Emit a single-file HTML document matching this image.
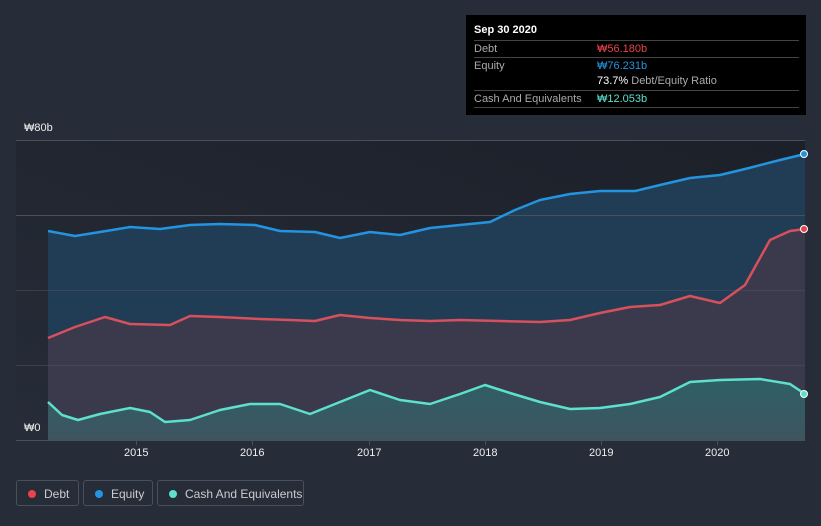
<!DOCTYPE html>
<html><head><meta charset="utf-8"><style>
body{margin:0;width:821px;height:526px;background:#262c38;font-family:"Liberation Sans","Noto Sans CJK KR",sans-serif;overflow:hidden;position:relative}
.tt{position:absolute;left:466px;top:15px;width:340px;height:100px;background:#000;color:#fff;font-size:11px}
.tt .r{position:absolute;left:8px;width:325px;border-top:1px solid #444;height:17px;line-height:17px;color:#aaa}
.tt .v{position:absolute;left:123px;top:0}
.lg{position:absolute;top:480px;height:26px;border:1px solid #4a505a;border-radius:3px;color:#ccc;font-size:12px;line-height:26px;box-sizing:border-box}
.lg i{position:absolute;left:11px;top:9px;width:8px;height:8px;border-radius:50%}
.lg span{position:absolute;left:27px}
.ax{position:absolute;color:#eee;font-size:11px}
</style></head><body>
<svg width="821" height="526" style="position:absolute;left:0;top:0">
<defs>
<linearGradient id="bg" x1="0" y1="1" x2="1" y2="0"><stop offset="0" stop-color="#262c38"/><stop offset="1" stop-color="#1c2029"/></linearGradient>
<linearGradient id="cf" x1="0" y1="0" x2="0" y2="1"><stop offset="0" stop-color="#2e5f66"/><stop offset="1" stop-color="#3e5560"/></linearGradient>
</defs>
<rect x="16" y="140" width="789" height="300" fill="url(#bg)"/>
<path d="M48,231 L75,236 L100,232 L130,227 L160,229 L190,225 L220,224 L255,225 L280,231 L315,232 L340,238 L370,232 L400,235 L430,228 L460,225 L490,222 L515,210 L540,200 L570,194 L600,191 L635,191 L660,185 L690,178 L720,175 L745,169 L780,160 L805,154 L805,440 L48,440Z" fill="#213d55"/>
<path d="M48,338 L75,327 L105,317 L130,324 L170,325 L190,316 L220,317 L260,319 L290,320 L315,321 L340,315 L370,318 L400,320 L430,321 L460,320 L500,321 L540,322 L570,320 L600,313 L630,307 L660,305 L690,296 L720,303 L745,285 L770,240 L790,231 L805,229 L805,440 L48,440Z" fill="#3a3a4c"/>
<path d="M48,402 L62,415 L78,420 L100,414 L130,408 L150,412 L165,422 L190,420 L220,410 L250,404 L280,404 L310,414 L340,402 L370,390 L400,400 L430,404 L460,394 L485,385 L510,393 L540,402 L570,409 L600,408 L630,404 L660,397 L690,382 L720,380 L760,379 L790,384 L805,394 L805,440 L48,440Z" fill="url(#cf)"/>
<g stroke="#4a505a" stroke-width="1"><line x1="16" y1="140.5" x2="805" y2="140.5"/><line x1="16" y1="215.5" x2="805" y2="215.5"/><line x1="16" y1="290.5" x2="805" y2="290.5" stroke-opacity=".6"/><line x1="16" y1="365.5" x2="805" y2="365.5" stroke-opacity=".6"/><line x1="16" y1="440.5" x2="805" y2="440.5"/></g>
<g fill="none" stroke-width="2.5" stroke-linejoin="round">
<polyline stroke="#2394df" points="48,231 75,236 100,232 130,227 160,229 190,225 220,224 255,225 280,231 315,232 340,238 370,232 400,235 430,228 460,225 490,222 515,210 540,200 570,194 600,191 635,191 660,185 690,178 720,175 745,169 780,160 805,154"/>
<polyline stroke="#d8505c" points="48,338 75,327 105,317 130,324 170,325 190,316 220,317 260,319 290,320 315,321 340,315 370,318 400,320 430,321 460,320 500,321 540,322 570,320 600,313 630,307 660,305 690,296 720,303 745,285 770,240 790,231 805,229"/>
<polyline stroke="#5de0cc" points="48,402 62,415 78,420 100,414 130,408 150,412 165,422 190,420 220,410 250,404 280,404 310,414 340,402 370,390 400,400 430,404 460,394 485,385 510,393 540,402 570,409 600,408 630,404 660,397 690,382 720,380 760,379 790,384 805,394"/>
</g>
<circle cx="804" cy="154" r="3.5" fill="#2394df" stroke="#fff" stroke-width="1"/>
<circle cx="804" cy="229" r="3.5" fill="#e8434e" stroke="#fff" stroke-width="1"/>
<circle cx="804" cy="394" r="3.5" fill="#5de0cc" stroke="#fff" stroke-width="1"/>
<g stroke="#4a505a"><line x1="136.5" y1="440" x2="136.5" y2="445"/><line x1="252.5" y1="440" x2="252.5" y2="445"/><line x1="369.5" y1="440" x2="369.5" y2="445"/><line x1="485.5" y1="440" x2="485.5" y2="445"/><line x1="601.5" y1="440" x2="601.5" y2="445"/><line x1="717.5" y1="440" x2="717.5" y2="445"/></g>
</svg>
<div class="ax" style="left:24px;top:122px">₩80b</div>
<div class="ax" style="left:24px;top:422px">₩0</div>
<div class="ax" style="left:124px;top:447px">2015</div>
<div class="ax" style="left:240px;top:447px">2016</div>
<div class="ax" style="left:357px;top:447px">2017</div>
<div class="ax" style="left:473px;top:447px">2018</div>
<div class="ax" style="left:589px;top:447px">2019</div>
<div class="ax" style="left:705px;top:447px">2020</div>
<div class="tt">
<div style="position:absolute;left:8px;top:9px;font-weight:bold">Sep 30 2020</div>
<div class="r" style="top:25px">Debt<span class="v" style="color:#e8434e">₩56.180b</span></div>
<div class="r" style="top:42px">Equity<span class="v" style="color:#2394df">₩76.231b</span></div>
<div class="r" style="top:58px;border-top:none"><span class="v" style="color:#fff">73.7% <span style="color:#aaa">Debt/Equity Ratio</span></span></div>
<div class="r" style="top:75px">Cash And Equivalents<span class="v" style="color:#5de0cc">₩12.053b</span></div>
<div style="position:absolute;left:8px;top:92px;width:325px;border-top:1px solid #444"></div>
</div>
<div class="lg" style="left:16px;width:63px"><i style="background:#e8434e"></i><span>Debt</span></div>
<div class="lg" style="left:83px;width:70px"><i style="background:#2394df"></i><span>Equity</span></div>
<div class="lg" style="left:157px;width:147px"><i style="background:#5de0cc"></i><span>Cash And Equivalents</span></div>
</body></html>
